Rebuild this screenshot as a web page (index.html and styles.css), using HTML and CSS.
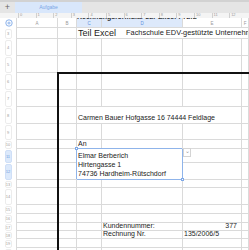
FILE: index.html
```html
<!DOCTYPE html>
<html>
<head lang="de">
    <meta charset="UTF-8">
    <title>Rechnung</title>
    <link rel="stylesheet" href="styles.css">
</head>
<body>
<div id="topbar">
    <span class="plus">+</span>
    <div class="tab">Aufgabe</div>
</div>
<div id="ruler">
    <span>0</span><span>1</span><span>2</span><span>3</span><span>4</span><span>5</span><span>6</span>
    <span>7</span><span>8</span><span>9</span><span>10</span><span>11</span><span>12</span>
</div>
<div id="sheet">
    <!-- kopfzeile -->
    <div class="corner"><svg width="8" height="8" viewBox="0 0 8 8"><circle cx="4" cy="4" r="3.2" fill="none" stroke="#7fa9e8" stroke-width="0.9"/><circle cx="4" cy="4" r="1.6" fill="#a9c6f0"/></svg></div>
    <div class="ch">A</div>
    <div class="ch">B</div>
    <div class="ch sel">C</div>
    <div class="ch sel">D</div>
    <div class="ch">E</div>
    <div class="ch">F</div>

    <div class="rh"><span>3</span></div><div></div><div></div>
    <div class="wide title"><span class="big">Teil Excel</span><span class="sub">Fachschule EDV-gestützte Unternehmensführung</span></div>

    <div class="rh"><span>4</span></div><div></div><div></div><div></div><div></div><div></div><div></div>
    <div class="rh"><span>5</span></div><div></div><div></div><div></div><div></div><div></div><div></div>
    <div class="rh"><span>6</span></div><div></div><div></div><div></div><div></div><div></div><div></div>
    <div class="rh"><span>7</span></div><div></div><div></div><div></div><div></div><div></div><div></div>

    <div class="rh"><span>8</span></div><div></div><div></div>
    <div class="span3">Carmen Bauer Hofgasse 16 74444 Feldlage</div><div></div>

    <div class="rh"><span>9</span></div><div></div><div></div><div></div><div></div><div></div><div></div>
    <div class="rh"><span>10</span></div><div></div><div></div><div>An</div><div></div><div></div><div></div>

    <div class="rh sel"><span>11</span></div><div></div><div></div>
    <div class="merged">
        <div>Elmar Berberich</div>
        <div>Hirtengasse 1</div>
        <div>74736 Hardheim-Rütschdorf</div>
        <i class="handle tl"></i><i class="handle br"></i>
        <b class="drop">&#8964;</b>
    </div>
    <div></div><div></div>
    <div class="rh sel"><span>12</span></div><div></div><div></div><div></div><div></div>

    <div class="rh"><span>13</span></div><div></div><div></div><div></div><div></div><div></div><div></div>
    <div class="rh"><span>14</span></div><div></div><div></div><div></div><div></div><div></div><div></div>
    <div class="rh"><span>15</span></div><div></div><div></div><div></div><div></div><div></div><div></div>
    <div class="rh"><span>16</span></div><div></div><div></div><div></div><div></div><div></div><div></div>
    <div class="rh"><span>17</span></div><div></div><div></div><div></div><div>Kundennummer:</div><div class="num">377</div><div></div>
    <div class="rh"><span>18</span></div><div></div><div></div><div></div><div>Rechnung Nr.</div><div>135/2006/5</div><div></div>
    <div class="rh"><span>19</span></div><div></div><div></div><div></div><div></div><div></div><div></div>
    <div class="rh"><span>20</span></div><div></div><div></div><div></div><div></div><div></div><div></div>
</div>
<div class="cut-title"><span>Rechnungsformular zur Excel-Prüfung 2006</span></div>
<div class="print-frame"></div>
</body>
</html>
```

FILE: styles.css
```css
*{
    margin: 0;
    padding: 0;
    box-sizing: border-box;
}
body{
    width: 249px;
    height: 250px;
    overflow: hidden;
    position: relative;
    background: #ffffff;
    font-family: "Liberation Sans", Arial, sans-serif;
    color: #222222;
}
#topbar{
    height: 13px;
    background: #e5e5e5;
    border-top: 2px solid #d2d2d2;
    display: flex;
}
#topbar .plus{
    width: 15px;
    text-align: center;
    font-size: 9px;
    line-height: 11px;
    color: #666666;
}
#topbar .tab{
    width: 67px;
    background: #d9e7fb;
    color: #7aa6e6;
    font-size: 5px;
    line-height: 11px;
    text-align: center;
}
#ruler{
    height: 5px;
    background: #f4f4f4;
    display: flex;
    padding-left: 18px;
    font-size: 4px;
    line-height: 4px;
    color: #9a9a9a;
    overflow: hidden;
}
#ruler span{
    flex: none;
    width: 17.6px;
    border-left: 1px solid #d0d0d0;
    padding-left: 1px;
}
#sheet{
    display: grid;
    grid-template-columns: 17px 41px 19px 25px 81px 59px 1fr;
    grid-template-rows: 10px 11px 17px 17px 17px 17px 17px 16px 9px 14px 17px 8px 17px 9px 9px 8px 8px 9px 10px;
}
#sheet > div{
    border-right: 1px solid #dadada;
    border-bottom: 1px solid #dadada;
    display: flex;
    align-items: flex-end;
    white-space: nowrap;
    overflow: hidden;
    font-size: 7px;
    line-height: 8px;
    padding-left: 1px;
}
#sheet > .corner{
    align-items: center;
    justify-content: center;
    border-bottom: none;
}
#sheet > .ch{
    align-items: center;
    justify-content: center;
    font-size: 4.5px;
    color: #999999;
    padding: 3px 0 0;
}
#sheet > .ch.sel{
    background: #dde9fb;
    color: #5f91dc;
}
#sheet > .rh{
    border-bottom: none;
    align-items: stretch;
    justify-content: center;
    padding: 1px 0 0;
}
.rh span{
    width: 7px;
    border: 1px solid #ececec;
    border-radius: 2px;
    font-size: 4px;
    color: #9a9a9a;
    display: flex;
    align-items: center;
    justify-content: center;
}
.rh.sel span{
    background: #dce9fb;
    border-color: #cfdff7;
    color: #6b9be0;
}
#sheet > .title{
    grid-column: 4 / -1;
    line-height: 10px;
}
.title .big{
    font-size: 9px;
}
.title .sub{
    font-size: 7.4px;
    margin-left: 10px;
}
#sheet > .span3{
    grid-column: span 3;
    padding-bottom: 1px;
}
#sheet > .merged{
    grid-column: span 2;
    grid-row: span 2;
    flex-direction: column;
    align-items: flex-start;
    justify-content: flex-end;
    overflow: visible;
    position: relative;
    z-index: 1;
    border-color: #8fb4ea;
    box-shadow: -1px -1px 0 #8fb4ea;
    line-height: 9px;
    padding-bottom: 1px;
}
.handle{
    position: absolute;
    width: 3px;
    height: 3px;
    background: #ffffff;
    border: 1px solid #7fa9e8;
}
.handle.tl{
    left: -2px;
    top: -2px;
}
.handle.br{
    right: -2px;
    bottom: -2px;
}
.drop{
    position: absolute;
    left: calc(100% + 1px);
    top: -1px;
    width: 8px;
    height: 9px;
    border: 1px solid #d4d4d4;
    background: #ffffff;
    color: #9a9a9a;
    font-weight: normal;
    font-size: 6px;
    line-height: 5px;
    text-align: center;
}
#sheet > .num{
    justify-content: flex-end;
    padding-right: 4px;
}
.cut-title{
    position: absolute;
    left: 77px;
    top: 18px;
    width: 120px;
    height: 3px;
    overflow: hidden;
    white-space: nowrap;
}
.cut-title span{
    display: block;
    font-weight: bold;
    font-size: 7px;
    line-height: 7px;
    margin-top: -5px;
    color: #333333;
}
.print-frame{
    position: absolute;
    left: 57px;
    top: 72px;
    right: -4px;
    bottom: -4px;
    border-top: 2px solid #111111;
    border-left: 2px solid #111111;
    pointer-events: none;
}
```
